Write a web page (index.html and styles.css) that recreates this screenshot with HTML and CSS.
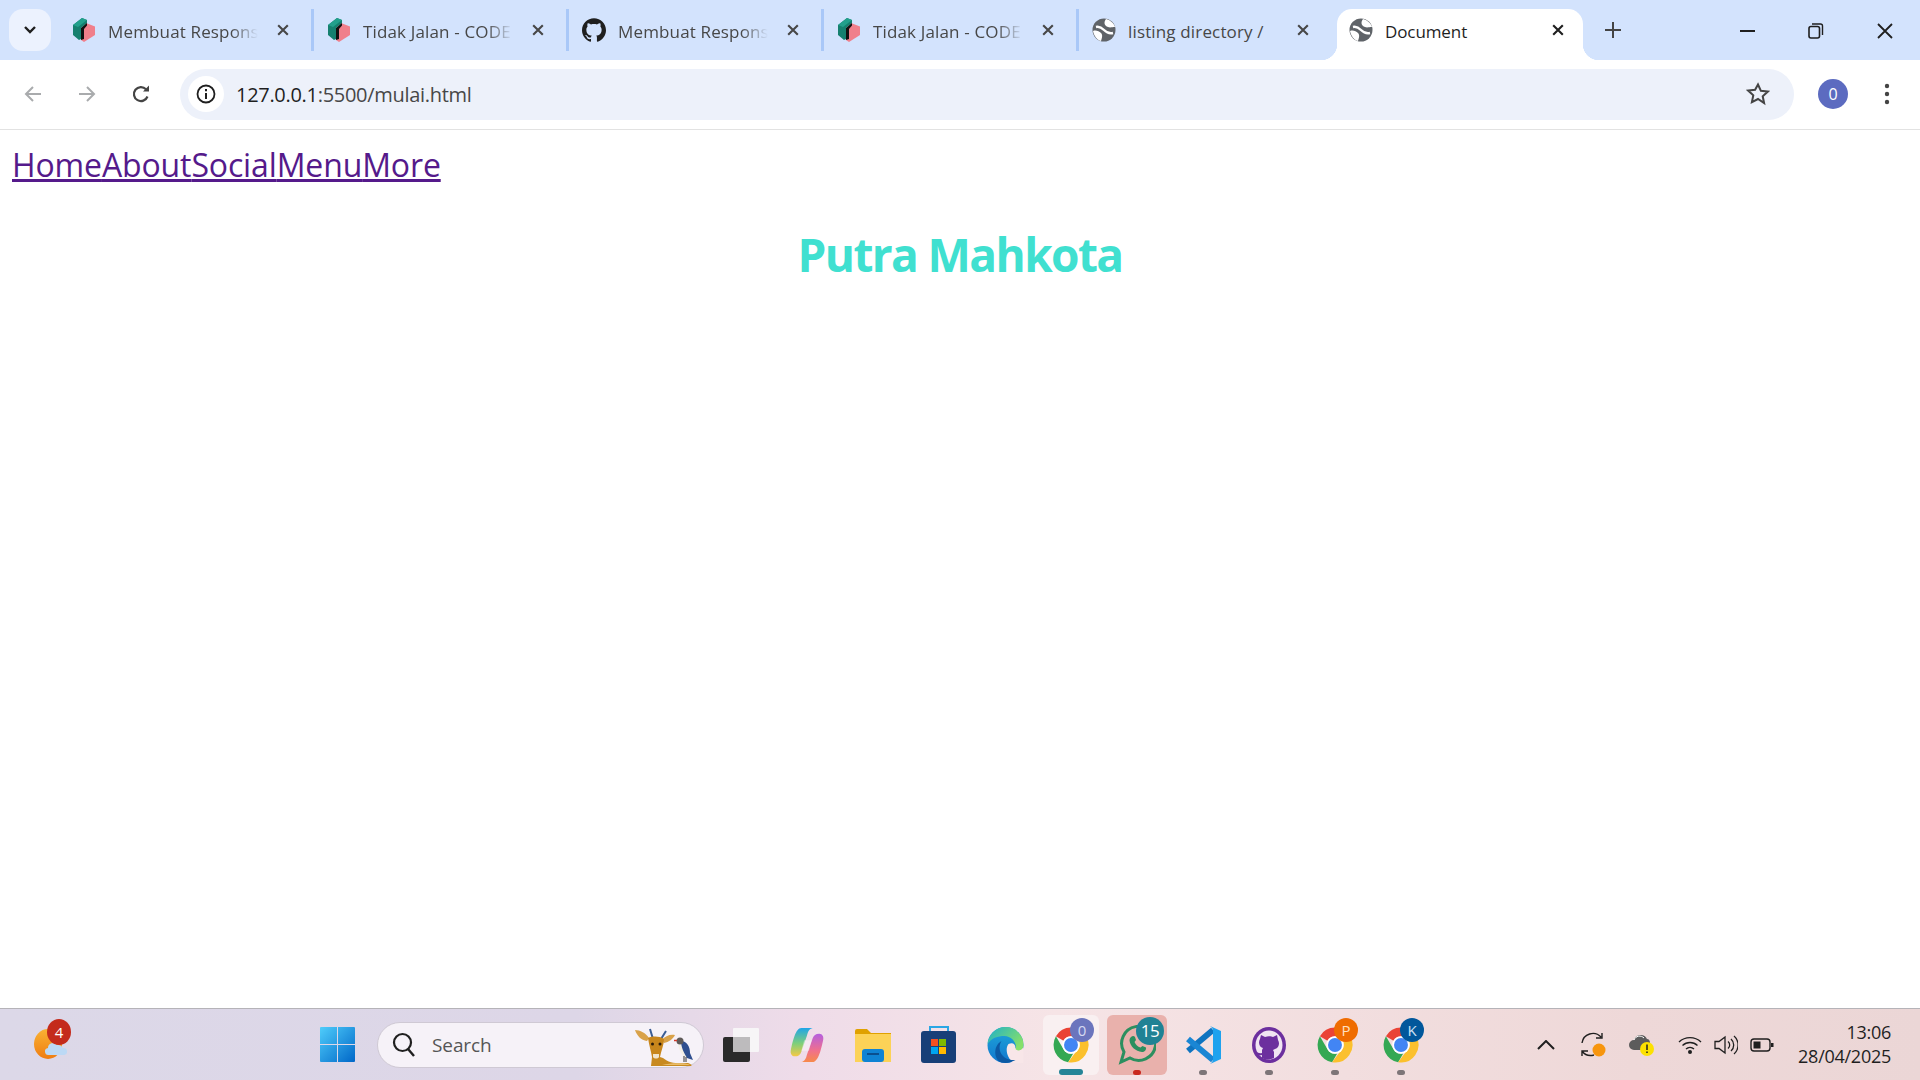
FILE: index.html
```html
<!DOCTYPE html>
<html lang="id">
<head>
  <meta charset="UTF-8">
  <title>Document</title>
  <link rel="stylesheet" href="styles.css">
</head>
<body>

<svg class="defs" width="0" height="0">
  <symbol id="cube" viewBox="0 0 24 26">
    <path fill="#f07f8b" d="M14 6l9 3.500V18l-11 7-3-2V12z"/>
    <path fill="#15806f" d="M1 8 10 1l5 2v3l-6 5v11l-2 1-6-5z"/>
    <path fill="#22a08c" d="M1 8 10 1l5 2-9 7z"/>
    <path fill="#111" d="M9 11l6-5v2.500l-3 3.500v10l-3 1z"/>
  </symbol>
  <symbol id="globe" viewBox="0 0 24 24">
    <circle cx="12" cy="12" r="11.500" fill="#5f6368"/>
    <path fill="#fff" d="M14 1c-3 4-1 7 2 8 2 1 4 0 7 0-1-4-5-7-9-8zM1 13c3-1 6 0 8 2s1 5 0 8c-4-1-7-5-8-10z"/>
    <path fill="none" stroke="#fff" stroke-width="2.400" d="M4 9c4-1 6 1 8 3s5 4 9 3"/>
  </symbol>
  <symbol id="close" viewBox="0 0 16 16">
    <path fill="none" stroke="currentColor" stroke-width="2.400" d="M2.500 2.500l11 11M13.500 2.500l-11 11"/>
  </symbol>
  <symbol id="chrome" viewBox="0 0 24 24">
    <path fill="#ea4335" d="M12 1a11 11 0 0 1 9.530 5.500H12a5.500 5.500 0 0 0-4.760 2.750L2.470 6.500A11 11 0 0 1 12 1z"/>
    <path fill="#34a853" d="M2.470 6.500l4.770 8.250a5.500 5.500 0 0 0 6.160 2.570l-3.200 5.530A11 11 0 0 1 2.470 6.500z"/>
    <path fill="#fbc02d" d="M21.530 6.500A11 11 0 0 1 10.200 22.850l4.560-6.100a5.500 5.500 0 0 0 2-7.500L12 6.500z"/>
    <circle cx="12" cy="12" r="5.500" fill="#fff"/>
    <circle cx="12" cy="12" r="4.400" fill="#4285f4"/>
  </symbol>
</svg>

<header class="tabstrip">
  <button class="tab-search">
    <svg width="14" height="10" viewBox="0 0 14 10"><path fill="none" stroke="#1f1f1f" stroke-width="2.400" d="M2 2l5 5 5-5"/></svg>
  </button>
  <div class="tabs">
    <div class="tab">
      <svg class="favicon"><use href="#cube"/></svg>
      <span class="tab-title">Membuat Responsi</span>
      <svg class="tab-close"><use href="#close"/></svg>
    </div>
    <div class="tab">
      <svg class="favicon"><use href="#cube"/></svg>
      <span class="tab-title">Tidak Jalan - CODE</span>
      <svg class="tab-close"><use href="#close"/></svg>
    </div>
    <div class="tab">
      <svg class="favicon" viewBox="0 0 24 24"><path fill="#1f1f1f" d="M12 .297c-6.630 0-12 5.373-12 12 0 5.303 3.438 9.800 8.205 11.385.6.113.82-.258.82-.577 0-.285-.01-1.040-.015-2.040-3.338.724-4.042-1.610-4.042-1.610C4.422 18.070 3.633 17.700 3.633 17.700c-1.087-.744.084-.729.084-.729 1.205.084 1.838 1.236 1.838 1.236 1.070 1.835 2.809 1.305 3.495.998.108-.776.417-1.305.76-1.605-2.665-.3-5.466-1.332-5.466-5.930 0-1.310.465-2.380 1.235-3.220-.135-.303-.54-1.523.105-3.176 0 0 1.005-.322 3.300 1.230.96-.267 1.980-.399 3-.405 1.020.006 2.040.138 3 .405 2.280-1.552 3.285-1.230 3.285-1.230.645 1.653.24 2.873.12 3.176.765.84 1.230 1.910 1.230 3.220 0 4.610-2.805 5.625-5.475 5.920.42.36.81 1.096.81 2.220 0 1.606-.015 2.896-.015 3.286 0 .315.21.69.825.57C20.565 22.092 24 17.592 24 12.297c0-6.627-5.373-12-12-12"/></svg>
      <span class="tab-title">Membuat Respons</span>
      <svg class="tab-close"><use href="#close"/></svg>
    </div>
    <div class="tab">
      <svg class="favicon"><use href="#cube"/></svg>
      <span class="tab-title">Tidak Jalan - CODE</span>
      <svg class="tab-close"><use href="#close"/></svg>
    </div>
    <div class="tab tab-last">
      <svg class="favicon"><use href="#globe"/></svg>
      <span class="tab-title no-fade">listing directory /</span>
      <svg class="tab-close"><use href="#close"/></svg>
    </div>
    <div class="tab tab-active">
      <svg class="favicon"><use href="#globe"/></svg>
      <span class="tab-title no-fade">Document</span>
      <svg class="tab-close"><use href="#close"/></svg>
    </div>
  </div>
  <svg class="new-tab" width="16" height="16" viewBox="0 0 16 16"><path stroke="#444" stroke-width="2" d="M8 0v16M0 8h16"/></svg>
  <div class="win-controls">
    <svg width="16" height="16" viewBox="0 0 16 16"><path stroke="#1f1f1f" stroke-width="2" d="M0 8h15"/></svg>
    <svg width="16" height="16" viewBox="0 0 16 16"><rect x="1" y="3.500" width="10.500" height="11.500" rx="2" fill="none" stroke="#1f1f1f" stroke-width="1.600"/><path fill="none" stroke="#1f1f1f" stroke-width="1.400" d="M4 1h8.500a2 2 0 0 1 2 2v9"/></svg>
    <svg width="18" height="18" viewBox="0 0 18 18"><path stroke="#1f1f1f" stroke-width="1.800" fill="none" d="M2 2l14 14M16 2L2 16"/></svg>
  </div>
</header>

<nav class="toolbar">
  <svg class="tool-icon" viewBox="0 0 20 20"><path fill="none" stroke="#a9abad" stroke-width="2" d="M18 10H3M10 3l-7 7 7 7"/></svg>
  <svg class="tool-icon" viewBox="0 0 20 20"><path fill="none" stroke="#a9abad" stroke-width="2" d="M2 10h15M10 3l7 7-7 7"/></svg>
  <svg class="tool-icon" viewBox="0 0 20 20"><path fill="none" stroke="#444" stroke-width="2.200" d="M16.500 12.500A7 7 0 1 1 15 5.200"/><path fill="#444" d="M12 7.500h6v-6z"/></svg>
  <div class="omnibox">
    <span class="site-chip">
      <svg width="20" height="20" viewBox="0 0 20 20"><circle cx="10" cy="10" r="8.500" fill="none" stroke="#1f1f1f" stroke-width="1.800"/><path stroke="#1f1f1f" stroke-width="2" d="M10 9v6M10 5v2.200"/></svg>
    </span>
    <span class="url">127.0.0.1<span class="url-rest">:5500/mulai.html</span></span>
    <svg class="star" width="24" height="24" viewBox="0 0 24 24"><path fill="none" stroke="#444" stroke-width="2" d="M12 2.500l2.900 6.300 6.900.8-5.100 4.700 1.400 6.800L12 17l-6.100 3.100 1.400-6.800-5.100-4.700 6.900-.8z"/></svg>
  </div>
  <span class="avatar">0</span>
  <svg class="kebab" width="6" height="22" viewBox="0 0 6 22"><circle cx="3" cy="3" r="2.200" fill="#444"/><circle cx="3" cy="11" r="2.200" fill="#444"/><circle cx="3" cy="19" r="2.200" fill="#444"/></svg>
</nav>

<main class="page">
  <div class="links">
    <a href="#">Home</a><a href="#">About</a><a href="#">Social</a><a href="#">Menu</a><a href="#">More</a>
  </div>
  <h1>Putra Mahkota</h1>
</main>

<footer class="taskbar">
  <div class="weather">
    <svg width="40" height="50" viewBox="0 0 40 50">
      <defs><linearGradient id="sun" x1="0" y1="0" x2="0" y2="1"><stop offset="0" stop-color="#f9b233"/><stop offset="1" stop-color="#ef7d12"/></linearGradient></defs>
      <ellipse cx="16" cy="24" rx="14" ry="15" fill="url(#sun)"/>
      <path fill="#bcd9f5" d="M17 35a3.500 3.500 0 0 1-1-7 5 5 0 0 1 9-3 6 6 0 0 1 6 3 3.500 3.500 0 0 1 1 7z"/>
    </svg>
    <span class="badge badge-weather">4</span>
  </div>

  <svg class="winlogo" width="35" height="35" viewBox="0 0 35 35">
    <defs><linearGradient id="win" x1="0" y1="0" x2="1" y2="1"><stop offset="0" stop-color="#4fcdfb"/><stop offset="1" stop-color="#0067c8"/></linearGradient></defs>
    <path fill="url(#win)" d="M1 0h16v17H0V1a1 1 0 0 1 1-1zM18 0h16a1 1 0 0 1 1 1v16H18zM0 18h17v17H1a1 1 0 0 1-1-1zM18 18h17v16a1 1 0 0 1-1 1H18z"/>
  </svg>

  <div class="search">
    <svg width="24" height="26" viewBox="0 0 24 26"><circle cx="10.500" cy="10.500" r="8.500" fill="none" stroke="#1f1f1f" stroke-width="2.200"/><path stroke="#1f1f1f" stroke-width="2.400" d="M16 17l6 7"/></svg>
    <span class="search-text">Search</span>
    <svg class="search-art" width="60" height="40" viewBox="0 0 60 40">
      <path fill="#d9a24a" d="M2 3c5 0 11 3 14 8l-2 3C8 13 4 9 2 3zM42 8c-5-1-10 1-13 5l2 3c5-1 9-4 11-8z"/>
      <path stroke="#3b5d94" stroke-width="2" d="M17 2l3 10M33 4l-5 8"/>
      <path fill="#c88a20" d="M19 30l-1 9h40c2-1-2-3-4-3-10 1-18 0-24-5l-3-1z"/>
      <path fill="#e9bd6a" d="M29 38c8-2 18-2 26-1l2 1z"/>
      <path fill="#c8861c" d="M15 11c5-2 11-2 16 1 0 6-3 12-4 18-1 3-7 3-8 0-1-6-3-12-4-19z"/>
      <circle cx="19.500" cy="17" r="1.500" fill="#2b1a0a"/>
      <circle cx="27" cy="17" r="1.500" fill="#2b1a0a"/>
      <path fill="#f1e4cc" d="M20 27h6v3c-1 2-5 2-6 0z"/>
      <path fill="#f3efe6" d="M45 17c1 7 5 13 9 14l-2-11z"/>
      <path fill="#2f4f8f" d="M48 14c6 0 9 6 9 12l3 7-6-2c-3-5-6-11-6-17z"/>
      <circle cx="47" cy="14" r="3.500" fill="#5e5a58"/>
      <path stroke="#d23a2c" stroke-width="1.500" d="M41 13.500h3"/>
      <path stroke="#333" d="M51 29v6M53 30v5"/>
    </svg>
  </div>

  <div class="apps">
    <div class="app">
      <svg width="36" height="34" viewBox="0 0 36 34"><rect x="0" y="9" width="27" height="25" rx="2" fill="#2a2a2a"/><rect x="10" y="0" width="26" height="24" rx="1" fill="#f7f5f7"/><rect x="10" y="9" width="17" height="15" fill="#bdbbbd"/></svg>
    </div>
    <div class="app">
      <svg width="36" height="36" viewBox="0 0 36 38">
        <defs>
          <linearGradient id="cop-a" x1="0" y1="0" x2="0" y2="1"><stop offset="0" stop-color="#1fa5e8"/><stop offset=".55" stop-color="#7fcf7a"/><stop offset="1" stop-color="#f6c945"/></linearGradient>
          <linearGradient id="cop-b" x1="0" y1="0" x2="0" y2="1"><stop offset="0" stop-color="#b45fe0"/><stop offset=".6" stop-color="#f0708c"/><stop offset="1" stop-color="#f78a4a"/></linearGradient>
        </defs>
        <path fill="url(#cop-b)" d="M24 37H12c4-1 5-4 6-8l6-17c1-3 3-5 7-5 3 0 5 3 4 7-2 9-5 23-11 23z"/>
        <path fill="url(#cop-a)" d="M12 1h12c-4 1-5 4-6 8l-6 17c-1 3-3 5-7 5-3 0-5-3-4-7C3 15 6 1 12 1z"/>
        <path fill="#fff" opacity=".4" d="M15 14h8l-3 11h-8z"/>
      </svg>
    </div>
    <div class="app">
      <svg width="36" height="34" viewBox="0 0 36 34"><path fill="#e0a100" d="M0 3a2 2 0 0 1 2-2h10l4 4h20v6H0z"/><path fill="#fcd257" d="M0 6h36v28H0z"/><rect x="7" y="21" width="22" height="13" rx="3" fill="#0f83d4"/><rect x="12" y="25" width="12" height="2" fill="#0a4f8f"/></svg>
    </div>
    <div class="app">
      <svg width="36" height="38" viewBox="0 0 36 38"><path fill="none" stroke="#2aa7e5" stroke-width="2" d="M9 8V1h18v7"/><rect y="5" width="35" height="32" rx="3" fill="#173f78"/><rect x="10" y="13" width="7" height="7" fill="#f25022"/><rect x="18" y="13" width="7" height="7" fill="#7fba00"/><rect x="10" y="21" width="7" height="7" fill="#00a4ef"/><rect x="18" y="21" width="7" height="7" fill="#ffb900"/></svg>
    </div>
    <div class="app">
      <svg width="37" height="36" viewBox="0 0 36 36">
        <defs>
          <linearGradient id="edge" x1="0" y1="0" x2="0" y2="1"><stop offset="0" stop-color="#1fa8d8"/><stop offset="1" stop-color="#1176cf"/></linearGradient>
          <linearGradient id="edge-top" x1="0" y1="0" x2="1" y2=".6"><stop offset="0" stop-color="#1fb0c8"/><stop offset="1" stop-color="#86e06a"/></linearGradient>
        </defs>
        <circle cx="18" cy="18" r="18" fill="url(#edge)"/>
        <path fill="#f8e6e8" d="M21 17c4-2 7 0 7 4h8v15H26c-6-4-9-14-5-19z"/>
        <path fill="#0c59a4" d="M14 14c-5 8 0 20 14 19-4 2-7 3-10 3-6 0-9-3-10-8-1-6 1-11 6-14z"/>
        <path fill="url(#edge-top)" d="M18 0a18 18 0 0 1 18 18c0 5-5 7-8 4 2-6-4-13-11-13C10 9 4 11 0 17 1 7 9 0 18 0z"/>
      </svg>
    </div>
    <div class="app app-focus">
      <svg width="38" height="38"><use href="#chrome"/></svg>
      <span class="badge badge-chrome">0</span>
      <span class="pill"></span>
    </div>
    <div class="app app-alert">
      <svg width="38" height="40" viewBox="0 0 38 40">
        <path fill="none" stroke="#2c8f5f" stroke-width="3" d="M3 37l3-10A17 17 0 1 1 12 33z"/>
        <path fill="#2c8f5f" d="M13 12c1.500-1.500 3-1.500 4 0l1 3-1.500 2c1.500 3 3 4.500 6 5.500l2-1.500 3.500 1.500c.5 2.500-1.500 4.500-4 4.500-6.500-.5-12-6-12.500-11.500 0-1.500.5-2.500 1.500-3.500z"/>
      </svg>
      <span class="badge badge-wa">15</span>
      <span class="dot dot-red"></span>
    </div>
    <div class="app">
      <svg width="35" height="38" viewBox="0 0 35 38">
        <path stroke="#0f74c0" stroke-width="6" d="M27 4L2 25"/>
        <path stroke="#1a86d4" stroke-width="6" d="M2 13l25 21"/>
        <path fill="#1fa2ee" d="M24 0l11 5v28l-11 5c3-2 3-4 3-6V6c0-2 0-4-3-6z"/>
      </svg>
      <span class="dot"></span>
    </div>
    <div class="app">
      <svg width="34" height="36" viewBox="0 0 34 36">
        <ellipse cx="17" cy="18" rx="17" ry="18" fill="#6c2f9e"/>
        <ellipse cx="17" cy="18" rx="13.500" ry="14.500" fill="#f0e4f2"/>
        <path fill="#6c2f9e" d="M9 8l4 2c3-1 5-1 8 0l4-2 1 5c2 3 1 8-3 9l-2 1 1 2v6c-4 2-8 2-12 0v-3c-3 1-5 0-6-3 2 0 3 2 6 1v-3l1-2c-4-1-5-6-3-9z"/>
      </svg>
      <span class="dot"></span>
    </div>
    <div class="app">
      <svg width="38" height="38"><use href="#chrome"/></svg>
      <span class="badge badge-p">P</span>
      <span class="dot"></span>
    </div>
    <div class="app">
      <svg width="38" height="38"><use href="#chrome"/></svg>
      <span class="badge badge-k">K</span>
      <span class="dot"></span>
    </div>
  </div>

  <div class="tray">
    <span class="tray-cell">
      <svg width="18" height="10" viewBox="0 0 18 10"><path fill="none" stroke="#1f1f1f" stroke-width="2" d="M1 9l8-8 8 8"/></svg>
    </span>
    <span class="tray-cell">
      <svg width="26" height="26" viewBox="0 0 26 26"><path fill="none" stroke="#1f1f1f" stroke-width="1.400" d="M1 11A11 11 0 0 1 20 5M21 1v5h-6M1 24v-5h6M1 19a11 11 0 0 0 12 4"/><circle cx="18" cy="18" r="6.500" fill="#f7950e"/></svg>
    </span>
    <span class="tray-cell">
      <svg width="26" height="22" viewBox="0 0 26 22"><path fill="#5c5c5c" d="M5 16a5 5 0 0 1 0-10 7 7 0 0 1 13-1c2 0 3 2 3 4l-8 7z"/><path fill="none" stroke="#fff" d="M5 6a6 6 0 0 1 10-2"/><circle cx="18" cy="15" r="7" fill="#fce100"/><path stroke="#1f1f1f" stroke-width="1.500" d="M18 10.500v5.500M18 17.500v1.500"/></svg>
    </span>
    <span class="tray-cell tray-narrow tray-wifi">
      <svg width="24" height="18" viewBox="0 0 24 18"><path fill="none" stroke="#1f1f1f" stroke-width="1.400" d="M1 6a16 16 0 0 1 22 0M4.500 9.500a11 11 0 0 1 15 0M8 13a6 6 0 0 1 8 0"/><circle cx="12" cy="16" r="2" fill="#1f1f1f"/></svg>
    </span>
    <span class="tray-cell tray-narrow">
      <svg width="24" height="20" viewBox="0 0 24 20"><path fill="none" stroke="#1f1f1f" stroke-width="1.300" d="M1 6.500h4L11 2v16l-6-4.500H1zM14 6.500a4.500 4.500 0 0 1 0 7M17 4a8 8 0 0 1 0 12M20 1a12 12 0 0 1 0 18"/></svg>
    </span>
    <span class="tray-cell tray-narrow">
      <svg width="24" height="14" viewBox="0 0 24 14"><rect x="1" y="1" width="19" height="12" rx="3" fill="none" stroke="#1f1f1f" stroke-width="1.400"/><rect x="3.500" y="3.500" width="7" height="7" fill="#1f1f1f"/><rect x="21" y="5" width="2.500" height="4" fill="#1f1f1f"/></svg>
    </span>
    <div class="clock">
      <span>13:06</span>
      <span>28/04/2025</span>
    </div>
  </div>
</footer>

</body>
</html>
```

FILE: styles.css
```css
* { box-sizing: border-box; }
html, body { height: 100%; }
body {
  margin: 0;
  height: 1080px;
  overflow: hidden;
  display: flex;
  flex-direction: column;
  font-family: "Open Sans", "Noto Sans", Arial, sans-serif;
  background-color: #fff;
}
.defs { position: absolute; }

/* tab strip */
.tabstrip {
  height: 60px;
  flex: none;
  display: flex;
  align-items: flex-start;
  padding: 9px 0 0 9px;
  background-color: #d3e3fd;
}
.tab-search {
  width: 42px;
  height: 42px;
  flex: none;
  padding: 0;
  border: none;
  border-radius: 14px;
  background-color: #ecf2fe;
}
.tabs { display: flex; margin-left: 8px; }
.tab {
  width: 255px;
  height: 42px;
  display: flex;
  align-items: center;
  padding-left: 13px;
  border-right: 3px solid #a9c8f8;
  position: relative;
}
.tab-last { border-right: none; width: 258px; }
.favicon { width: 24px; height: 26px; flex: none; margin-right: 12px; }
.tab-title {
  width: 150px;
  flex: none;
  padding-top: 2px;
  font-size: 17px;
  letter-spacing: 0.15px;
  color: #474747;
  white-space: nowrap;
  overflow: hidden;
  -webkit-mask-image: linear-gradient(to right, #000 82%, transparent 100%);
  mask-image: linear-gradient(to right, #000 82%, transparent 100%);
}
.tab-title.no-fade { -webkit-mask-image: none; mask-image: none; }
.tab-close { width: 14px; height: 14px; margin-left: 18px; color: #474747; flex: none; }
.tab-active {
  width: 246px;
  height: 51px;
  padding: 0 0 9px 12px;
  border: none;
  border-radius: 15px 15px 0 0;
  background-color: #fff;
}
.tab-active .tab-title { color: #1f1f1f; letter-spacing: -0.1px; }
.tab-active .tab-close { color: #1f1f1f; margin-left: 16px; }
.tab-active::before, .tab-active::after {
  content: "";
  position: absolute;
  bottom: 0;
  width: 16px;
  height: 16px;
}
.tab-active::before { left: -16px; background: radial-gradient(circle at 0 0, transparent 16px, #fff 16.500px); }
.tab-active::after { right: -16px; background: radial-gradient(circle at 100% 0, transparent 16px, #fff 16.500px); }
.new-tab { margin: 13px 0 0 22px; flex: none; }
.win-controls {
  margin-left: auto;
  display: flex;
  align-items: center;
  gap: 52px;
  padding: 13px 26px 0 0;
}

/* address bar */
.toolbar {
  height: 70px;
  flex: none;
  display: flex;
  align-items: center;
  padding: 0 0 1px 23px;
  gap: 34px;
  border-bottom: 1px solid #e2e2e2;
  border-radius: 14px 14px 0 0;
  background-color: #fff;
}
.tool-icon { width: 20px; height: 20px; flex: none; }
.omnibox {
  width: 1614px;
  height: 51px;
  margin-left: -5px;
  display: flex;
  align-items: center;
  padding: 0 24px 0 8px;
  border-radius: 26px;
  background-color: #edf1fa;
}
.site-chip {
  width: 36px;
  height: 36px;
  flex: none;
  display: flex;
  align-items: center;
  justify-content: center;
  border-radius: 50%;
  background-color: #fff;
}
.url {
  margin-left: 12px;
  font-size: 20px;
  letter-spacing: -0.3px;
  color: #1f1f1f;
}
.url-rest { color: #474747; }
.star { margin-left: auto; flex: none; }
.avatar {
  width: 30px;
  height: 30px;
  flex: none;
  margin-left: -10px;
  border-radius: 50%;
  background-color: #5c6bc0;
  color: #fff;
  font-size: 16px;
  line-height: 30px;
  text-align: center;
}
.kebab { margin-left: 2px; flex: none; }

/* page content */
.page { flex: 1; padding: 12px; background-color: #fff; }
.links { font-size: 32px; line-height: 46px; letter-spacing: -0.13px; }
.links a { color: #551a8b; }
h1 {
  margin: 34px 0 0;
  font-size: 46px;
  line-height: 64px;
  font-weight: 700;
  letter-spacing: -1.6px;
  text-align: center;
  color: #40e0d0;
}

/* taskbar */
.taskbar {
  height: 72px;
  flex: none;
  display: flex;
  align-items: center;
  padding-left: 32px;
  border-top: 1px solid #b5b3b8;
  background: linear-gradient(to right, #dcd8e8 0%, #ddd6e7 30%, #efdce9 42%, #f6e4e6 55%, #eed8d8 85%, #ebd6d6 100%);
}
.weather { width: 40px; height: 50px; flex: none; position: relative; }
.badge {
  position: absolute;
  border-radius: 50%;
  color: #fff;
  text-align: center;
  font-size: 15px;
}
.badge-weather {
  top: -1px;
  left: 15px;
  width: 24px;
  height: 26px;
  line-height: 26px;
  background-color: #c42b1c;
}
.winlogo { margin-left: 248px; flex: none; }
.search {
  width: 327px;
  height: 46px;
  flex: none;
  margin-left: 22px;
  display: flex;
  align-items: center;
  padding: 0 10px 0 14px;
  border: 1px solid #cfc9d4;
  border-radius: 23px;
  background-color: #f6f2f8;
}
.search-text { margin-left: 16px; font-size: 19px; letter-spacing: -0.1px; color: #555; }
.search-art { margin-left: auto; align-self: flex-end; }
.apps { display: flex; margin-left: 4px; }
.app {
  width: 66px;
  height: 60px;
  display: flex;
  align-items: center;
  justify-content: center;
  position: relative;
}
.app-focus::before, .app-alert::before {
  content: "";
  position: absolute;
  top: 0;
  bottom: 0;
  left: 3px;
  right: 3px;
  border-radius: 6px;
}
.app-focus::before { left: 5px; right: 5px; background-color: #f9f0f1; }
.app-alert::before { background-color: #e9b1ac; }
.app svg { position: relative; z-index: 1; }
.dot {
  position: absolute;
  bottom: 0;
  left: 29px;
  width: 8px;
  height: 5px;
  border-radius: 3px;
  background-color: #7d7578;
  z-index: 1;
}
.dot-red { background-color: #c9281e; }
.pill {
  position: absolute;
  bottom: 0;
  left: 21px;
  width: 24px;
  height: 6px;
  border-radius: 3px;
  background-color: #258497;
  z-index: 1;
}
.app .badge { z-index: 2; width: 24px; height: 24px; line-height: 24px; top: 3px; left: 32px; font-size: 15px; }
.app .badge-chrome { background-color: #6b75bd; color: #d6daf2; }
.app .badge-wa {
  top: 2px;
  width: 28px;
  height: 28px;
  line-height: 28px;
  font-size: 17px;
  letter-spacing: -0.5px;
  background-color: #208294;
}
.app .badge-p { background-color: #ef6c00; color: #ffe0c2; }
.app .badge-k { background-color: #01579b; color: #cfe2f3; }
.tray { margin-left: auto; display: flex; align-items: center; padding-right: 29px; }
.tray-cell { width: 48px; display: flex; justify-content: center; align-items: center; }
.tray-narrow { width: 36px; }
.tray-wifi { margin-left: 6px; }
.clock {
  margin-left: 18px;
  display: flex;
  flex-direction: column;
  align-items: flex-end;
  gap: 3px;
  font-size: 18px;
  line-height: 21px;
  letter-spacing: -0.26px;
  color: #1f1f1f;
}
```
